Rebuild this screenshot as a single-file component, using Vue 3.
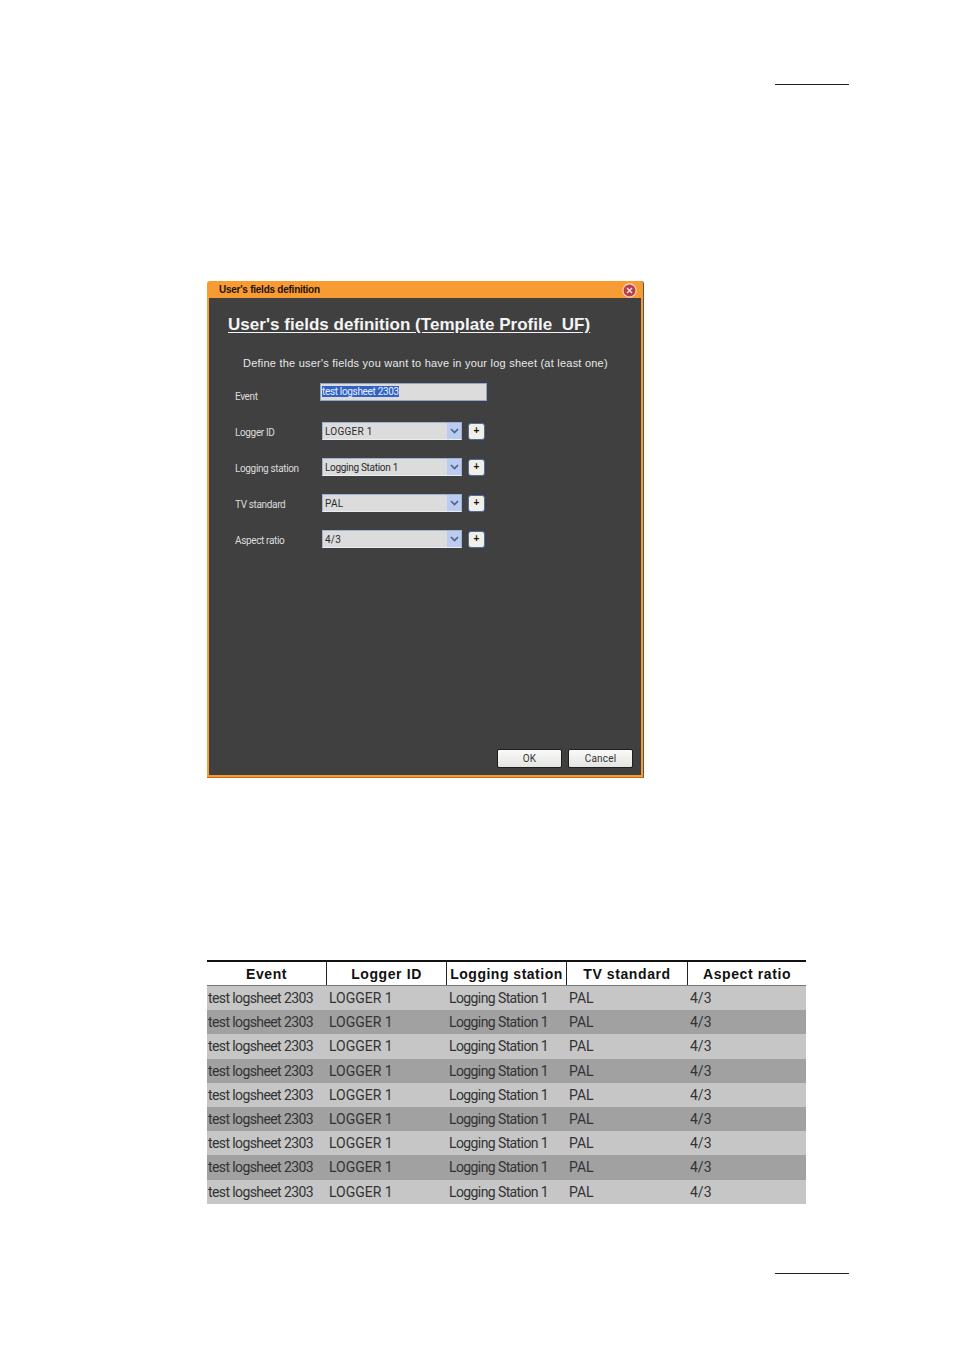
<script setup>
const fields = [
  { label: 'Logger ID', value: 'LOGGER 1', caps: true },
  { label: 'Logging station', value: 'Logging Station 1', caps: false },
  { label: 'TV standard', value: 'PAL', caps: true },
  { label: 'Aspect ratio', value: '4/3', caps: true },
]
const headers = ['Event', 'Logger ID', 'Logging station', 'TV standard', 'Aspect ratio']
const rows = Array.from({ length: 9 }, () => ['test logsheet 2303', 'LOGGER 1', 'Logging Station 1', 'PAL', '4/3'])
</script>

<template>
  <div class="page">
    <div class="rule top"></div>

    <section class="dialog">
      <header class="titlebar">
        <span class="titletext">User's fields definition</span>
        <svg class="close" width="15" height="15" viewBox="0 0 15 15">
          <circle cx="7.5" cy="7.5" r="6.6" fill="#b8404a" stroke="#f0d8d0" stroke-width="1.2" />
          <path d="M5 5l5 5M10 5l-5 5" stroke="#f4e4e0" stroke-width="1.4" />
        </svg>
      </header>
      <div class="body">
        <h1>User's fields definition (Template Profile&nbsp; UF)</h1>
        <p class="intro">Define the user's fields you want to have in your log sheet (at least one)</p>

        <div class="event-row">
          <span class="label event-label">Event</span>
          <div class="input"><span class="selected">test logsheet 2303</span></div>
        </div>

        <div v-for="f in fields" :key="f.label" class="field-row">
          <span class="label">{{ f.label }}</span>
          <div class="combo">
            <span class="combo-value" :class="{ caps: f.caps }">{{ f.value }}</span>
            <span class="arrow">
              <svg width="9" height="6" viewBox="0 0 9 6"><path d="M1 1l3.5 3.5L8 1" fill="none" stroke="#4d6185" stroke-width="1.6" /></svg>
            </span>
          </div>
          <button class="plus">+</button>
        </div>

        <div class="actions">
          <button class="btn">OK</button>
          <button class="btn">Cancel</button>
        </div>
      </div>
    </section>

    <section class="table">
      <div class="thead">
        <div v-for="h in headers" :key="h" class="th">{{ h }}</div>
      </div>
      <div v-for="(r, i) in rows" :key="i" class="tr" :class="{ dark: i % 2 === 1 }">
        <div v-for="(c, j) in r" :key="j" class="td">{{ c }}</div>
      </div>
    </section>

    <div class="rule bottom"></div>
  </div>
</template>

<style scoped>
.page {
  width: 954px;
  height: 1350px;
  background: #fff;
  box-sizing: border-box;
  padding-top: 84px;
  overflow: hidden;
  font-family: "Liberation Sans", Arial, sans-serif;
}
.rule {
  width: 74px;
  height: 1px;
  background: #222;
  margin-left: 775px;
}
.dialog {
  width: 437px;
  height: 497px;
  margin: 196px 0 0 207px;
  background: #f89b33;
  box-sizing: border-box;
  padding: 0 2px 2px;
  display: flex;
  flex-direction: column;
  border-radius: 3px 3px 0 0;
  border-right: 1px solid #555;
  border-bottom: 1px solid #b87020;
}
.titlebar {
  height: 17px;
  flex: none;
  display: flex;
  align-items: center;
  justify-content: space-between;
  padding: 0 4px 0 10px;
}
.titletext {
  font-size: 10px;
  font-weight: bold;
  letter-spacing: -0.25px;
  color: #1c1408;
}
.close {
  margin-top: 1px;
}
.body {
  flex: 1;
  background: #404040;
  padding: 16px 0 0 19px;
  display: flex;
  flex-direction: column;
  color: #e6e6e6;
}
h1 {
  margin: 0;
  font-size: 17px;
  line-height: 22px;
  font-weight: bold;
  color: #f4f4f4;
  text-decoration: underline;
  text-underline-offset: 2px;
  white-space: nowrap;
  letter-spacing: 0.03px;
}
.intro {
  margin: 20px 0 0 15px;
  font-size: 11px;
  line-height: 14px;
  color: #e8e8e8;
  white-space: nowrap;
  letter-spacing: 0.225px;
}
.event-row {
  display: flex;
  align-items: center;
  height: 18px;
  margin-top: 13px;
}
.label {
  width: 85px;
  margin-left: 7px;
  font-family: Roboto, sans-serif;
  font-size: 10px;
  letter-spacing: -0.36px;
  color: #dcdcdc;
  flex: none;
  padding-top: 3px;
  white-space: nowrap;
}
.event-label {
  padding-top: 9px;
}
.input {
  width: 167px;
  height: 18px;
  box-sizing: border-box;
  background: #dcdcdc;
  border: 1px solid #8ea6cc;
  padding: 2px 1px;
  display: flex;
  align-items: flex-start;
}
.selected {
  background: #3163c5;
  color: #e8eefa;
  font-family: Roboto, sans-serif;
  font-size: 10px;
  letter-spacing: -0.33px;
  line-height: 11px;
  white-space: nowrap;
}
.field-row {
  display: flex;
  align-items: center;
  height: 18px;
  margin-top: 18px;
}
.event-row + .field-row {
  margin-top: 21px;
}
.combo {
  width: 140px;
  height: 18px;
  margin-left: 2px;
  box-sizing: border-box;
  background: #dcdcdc;
  border: 1px solid #9db4d8;
  border-bottom-color: #e8eef8;
  display: flex;
  align-items: center;
  justify-content: space-between;
  flex: none;
}
.combo-value {
  font-family: Roboto, sans-serif;
  font-size: 10px;
  letter-spacing: -0.3px;
  padding-left: 2px;
  color: #2a2a2a;
  white-space: nowrap;
}
.combo-value.caps {
  letter-spacing: 0.25px;
}
.arrow {
  width: 14px;
  height: 16px;
  background: #bccbf0;
  display: flex;
  align-items: center;
  justify-content: center;
}
.plus {
  width: 17px;
  height: 17px;
  margin-left: 6px;
  padding: 0;
  box-sizing: border-box;
  border: 1px solid #4a6ea8;
  border-radius: 3px;
  background: #f2f0e6;
  color: #111;
  font: bold 10px/14px "Liberation Sans", sans-serif;
}
.actions {
  margin-top: auto;
  margin-bottom: 7px;
  margin-right: 8px;
  display: flex;
  justify-content: flex-end;
  gap: 6px;
}
.btn {
  width: 65px;
  height: 19px;
  padding: 0;
  box-sizing: border-box;
  border: 1px solid #1e1e1e;
  border-radius: 2px;
  background: linear-gradient(#fafafa, #e4e4e0);
  color: #333;
  font: 10px Roboto, sans-serif;
  letter-spacing: 0.2px;
}
.table {
  width: 599px;
  margin: 182px 0 0 207px;
}
.thead {
  display: grid;
  grid-template-columns: 120px 120px 120px 121px 118px;
  height: 26px;
  box-sizing: border-box;
  border-top: 2px solid #111;
  border-bottom: 1px solid #777;
  background: #fff;
}
.th {
  display: flex;
  align-items: center;
  justify-content: center;
  font-size: 14px;
  font-weight: bold;
  letter-spacing: 0.6px;
  color: #111;
  white-space: nowrap;
  border-right: 1.5px solid #222;
}
.th:nth-child(3) {
  letter-spacing: 0.5px;
}
.th:last-child {
  border-right: none;
}
.tr {
  display: grid;
  grid-template-columns: 120px 120px 120px 121px 118px;
  height: 24.2px;
  background: #c6c6c6;
}
.tr.dark {
  background: #a1a1a1;
}
.td {
  padding-left: 2px;
  font-family: Roboto, sans-serif;
  font-size: 14px;
  line-height: 24px;
  color: #333;
  white-space: nowrap;
}
.td:nth-child(1) {
  padding-left: 1px;
  letter-spacing: -0.6px;
}
.td:nth-child(3) {
  letter-spacing: -0.6px;
}
.rule.bottom {
  margin-top: 69px;
}
</style>
